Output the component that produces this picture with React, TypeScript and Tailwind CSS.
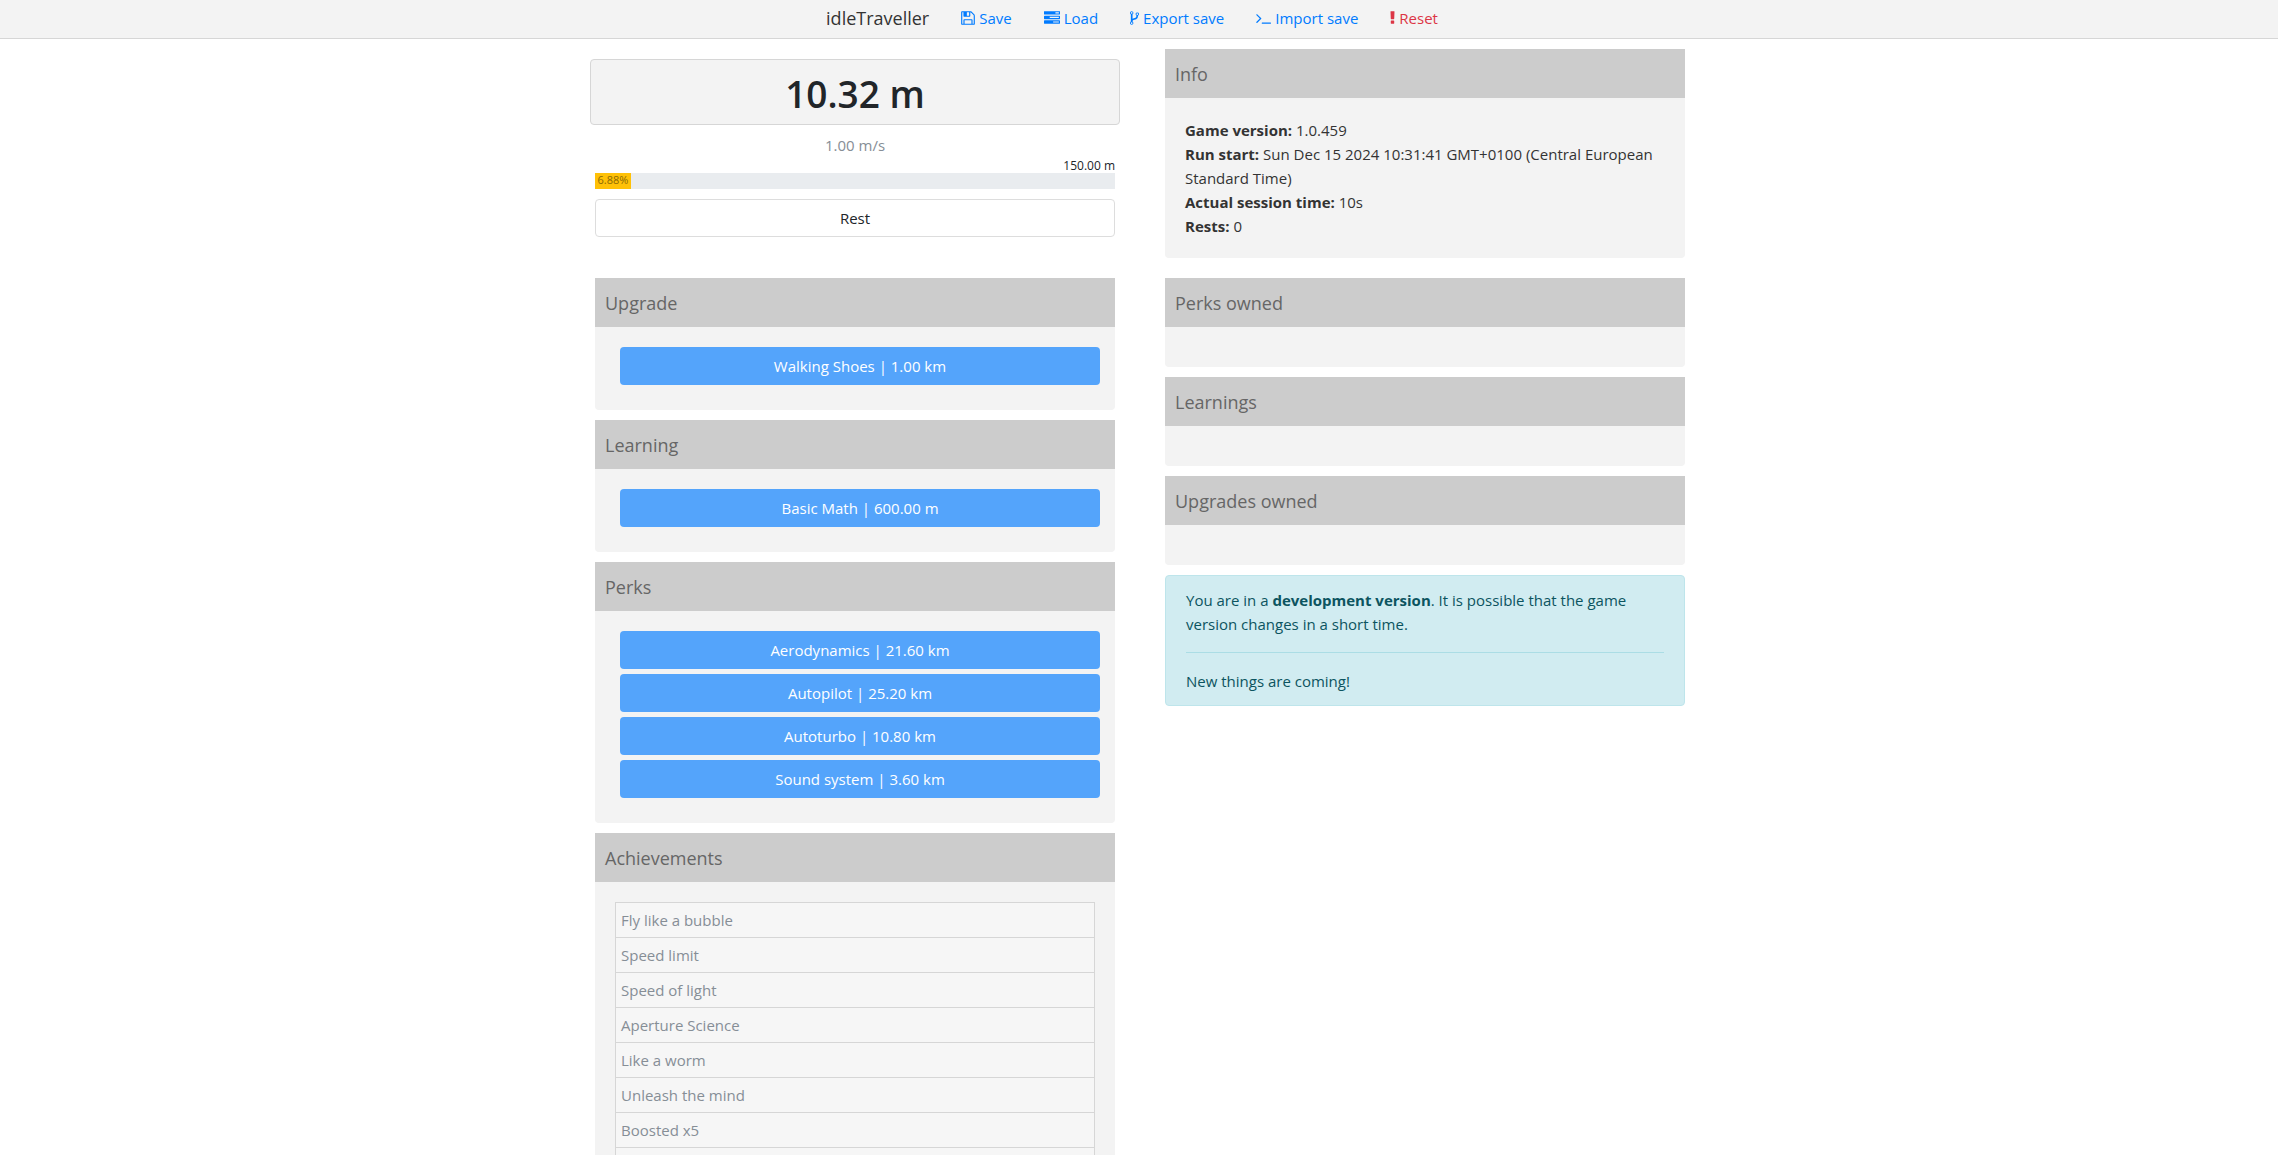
import type { ReactNode } from "react";

// Font Awesome 4 glyphs, drawn on its 1792 grid
const icons = {
  floppy: {
    viewBox: "128 0 1536 1792",
    width: 14,
    d: "M512 1536h768v-384h-768v384zm896 0h128v-896q0-14-10-38.5t-20-34.5l-281-281q-10-10-34-20t-39-10v416q0 40-28 68t-68 28h-576q-40 0-68-28t-28-68v-416h-128v1280h128v-416q0-40 28-68t68-28h832q40 0 68 28t28 68v416zm-384-928v-320q0-13-9.5-22.5t-22.5-9.5h-192q-13 0-22.5 9.5t-9.5 22.5v320q0 13 9.5 22.5t22.5 9.5h192q13 0 22.5-9.5t9.5-22.5zm640 32v928q0 40-28 68t-68 28h-1344q-40 0-68-28t-28-68v-1344q0-40 28-68t68-28h928q40 0 88 20t76 48l280 280q28 28 48 76t20 88z",
  },
  tasks: {
    viewBox: "0 0 1792 1792",
    width: 16,
    d: "M1024 1408h640v-128h-640v128zm-384-512h1024v-128h-1024v128zm640-512h384v-128h-384v128zm512 832v256q0 26-19 45t-45 19h-1664q-26 0-45-19t-19-45v-256q0-26 19-45t45-19h1664q26 0 45 19t19 45zm0-512v256q0 26-19 45t-45 19h-1664q-26 0-45-19t-19-45v-256q0-26 19-45t45-19h1664q26 0 45 19t19 45zm0-512v256q0 26-19 45t-45 19h-1664q-26 0-45-19t-19-45v-256q0-26 19-45t45-19h1664q26 0 45 19t19 45z",
  },
  fork: {
    viewBox: "384 0 1024 1792",
    width: 9,
    d: "M672 1472q0-40-28-68t-68-28-68 28-28 68 28 68 68 28 68-28 28-68zm0-1152q0-40-28-68t-68-28-68 28-28 68 28 68 68 28 68-28 28-68zm640 128q0-40-28-68t-68-28-68 28-28 68 28 68 68 28 68-28 28-68zm96 0q0 52-26 96.5t-70 69.5q-2 287-226 414-67 38-203 81-128 40-169.5 71t-41.5 100v26q44 25 70 69.5t26 96.5q0 80-56 136t-136 56-136-56-56-136q0-52 26-96.5t70-69.5v-820q-44-25-70-69.5t-26-96.5q0-80 56-136t136-56 136 56 56 136q0 52-26 96.5t-70 69.5v497q54-26 154-57 55-17 87.5-29.5t70.5-31 59-39.5 40.5-51 28-69.5 8.5-91.5q-44-25-70-69.5t-26-96.5q0-80 56-136t136-56 136 56 56 136z",
  },
  terminal: {
    viewBox: "64 0 1664 1792",
    width: 15,
    d: "M649 983l-466 466q-10 10-23 10t-23-10l-50-50q-10-10-10-23t10-23l393-393-393-393q-10-10-10-23t10-23l50-50q10-10 23-10t23 10l466 466q10 10 10 23t-10 23zm1079 457v64q0 14-9 23t-23 9h-960q-14 0-23-9t-9-23v-64q0-14 9-23t23-9h960q14 0 23 9t9 23z",
  },
  exclamation: {
    viewBox: "640 0 512 1792",
    width: 5,
    d: "M1088 1248v224q0 26-19 45t-45 19h-256q-26 0-45-19t-19-45v-224q0-26 19-45t45-19h256q26 0 45 19t19 45zm30-1056l-28 768q-1 26-20.5 45t-45.5 19h-256q-26 0-45.5-19t-20.5-45l-28-768q-1-26 17.5-45t44.5-19h320q26 0 44.5 19t17.5 45z",
  },
};

type IconName = keyof typeof icons;

const navItems: { label: string; icon: IconName; danger?: boolean }[] = [
  { label: "Save", icon: "floppy" },
  { label: "Load", icon: "tasks" },
  { label: "Export save", icon: "fork" },
  { label: "Import save", icon: "terminal" },
  { label: "Reset", icon: "exclamation", danger: true },
];

const shops = [
  { title: "Upgrade", items: ["Walking Shoes | 1.00 km"] },
  { title: "Learning", items: ["Basic Math | 600.00 m"] },
  {
    title: "Perks",
    items: [
      "Aerodynamics | 21.60 km",
      "Autopilot | 25.20 km",
      "Autoturbo | 10.80 km",
      "Sound system | 3.60 km",
    ],
  },
];

const achievements = [
  "Fly like a bubble",
  "Speed limit",
  "Speed of light",
  "Aperture Science",
  "Like a worm",
  "Unleash the mind",
  "Boosted x5",
  "Boosted x10",
];

const info = [
  { label: "Game version:", value: "1.0.459" },
  { label: "Run start:", value: "Sun Dec 15 2024 10:31:41 GMT+0100 (Central European Standard Time)" },
  { label: "Actual session time:", value: "10s" },
  { label: "Rests:", value: "0" },
];

const progress = 6.88;

function Icon({ name }: { name: IconName }) {
  const icon = icons[name];
  return (
    <svg width={icon.width} height={16} viewBox={icon.viewBox} fill="currentColor" aria-hidden="true">
      <path d={icon.d} />
    </svg>
  );
}

function Card({ title, children }: { title: string; children?: ReactNode }) {
  return (
    <section className="rounded-b bg-[#f3f3f3]">
      <h2 className="bg-[#cccccc] px-2.5 pt-[13px] pb-3 text-lg leading-6 text-[#666666]">{title}</h2>
      <div className="p-5">{children}</div>
    </section>
  );
}

export default function App() {
  return (
    <div className="h-screen overflow-hidden bg-white font-['Open_Sans','Noto_Sans',sans-serif] text-[15px] leading-6 text-[#212529]">
      {/* Navbar */}
      <nav className="flex h-[39px] items-center justify-center gap-8 border-b border-[#d6d6d6] bg-[#f3f3f3] pr-3.5 pb-0.5">
        <span className="text-lg text-[#333333]">idleTraveller</span>
        {navItems.map((item) => (
          <a
            key={item.label}
            href="#"
            className={`flex items-center gap-1 ${item.danger ? "text-[#dc3545]" : "text-[#007bff]"}`}
          >
            <Icon name={item.icon} />
            {item.label}
          </a>
        ))}
      </nav>

      <main className="mx-auto grid max-w-[1092px] grid-cols-2 gap-x-[50px] gap-y-5 pt-2.5 pl-0.5">
        {/* Distance */}
        <div className="pt-2.5">
          <div className="-mx-[5px] rounded border border-[#d6d6d6] bg-[#f3f3f3] pt-2.5 pb-1.5 text-center">
            <h1 className="text-[37px] leading-12 font-semibold">10.32 m</h1>
          </div>
          <p className="pt-2 text-center text-[#868e96]">1.00 m/s</p>
          <p className="pt-0.5 text-right text-xs leading-[14px]">150.00 m</p>
          <div className="h-4 bg-[#e9ecef]">
            <div className="h-4 bg-[#ffc107] text-center text-[11px] leading-[14px] text-[#8c6a04]" style={{ width: `${progress}%` }}>
              {progress}%
            </div>
          </div>
          <button className="mt-2.5 h-[38px] w-full rounded border border-[#dddddd] bg-white">Rest</button>
        </div>

        <Card title="Info">
          {info.map((row) => (
            <p key={row.label} className="text-[#333333]">
              <b>{row.label}</b> {row.value}
            </p>
          ))}
        </Card>

        {/* Shop */}
        <div className="space-y-2.5">
          {shops.map((shop) => (
            <Card key={shop.title} title={shop.title}>
              <div className="mb-[5px] ml-[5px] -mr-[5px] space-y-[5px]">
                {shop.items.map((item) => (
                  <button key={item} className="block h-[38px] w-full rounded bg-[#54a4fb] font-medium text-white">
                    {item}
                  </button>
                ))}
              </div>
            </Card>
          ))}
          <Card title="Achievements">
            <ul className="border border-[#d6d6d6] bg-[#f6f6f6] text-[#868e96]">
              {achievements.map((name) => (
                <li key={name} className="border-b border-[#d6d6d6] px-[5px] py-[5px] last:border-b-0">
                  {name}
                </li>
              ))}
            </ul>
          </Card>
        </div>

        {/* Owned */}
        <div className="space-y-2.5">
          <Card title="Perks owned" />
          <Card title="Learnings" />
          <Card title="Upgrades owned" />
          <div role="alert" className="rounded border border-[#bee5eb] bg-[#d1ecf1] px-5 py-3 text-[#0c5460]">
            <p>
              You are in a <b>development version</b>. It is possible that the game version changes in a short time.
            </p>
            <hr className="my-4 border-[#abdde5]" />
            <p>New things are coming!</p>
          </div>
        </div>
      </main>
    </div>
  );
}
